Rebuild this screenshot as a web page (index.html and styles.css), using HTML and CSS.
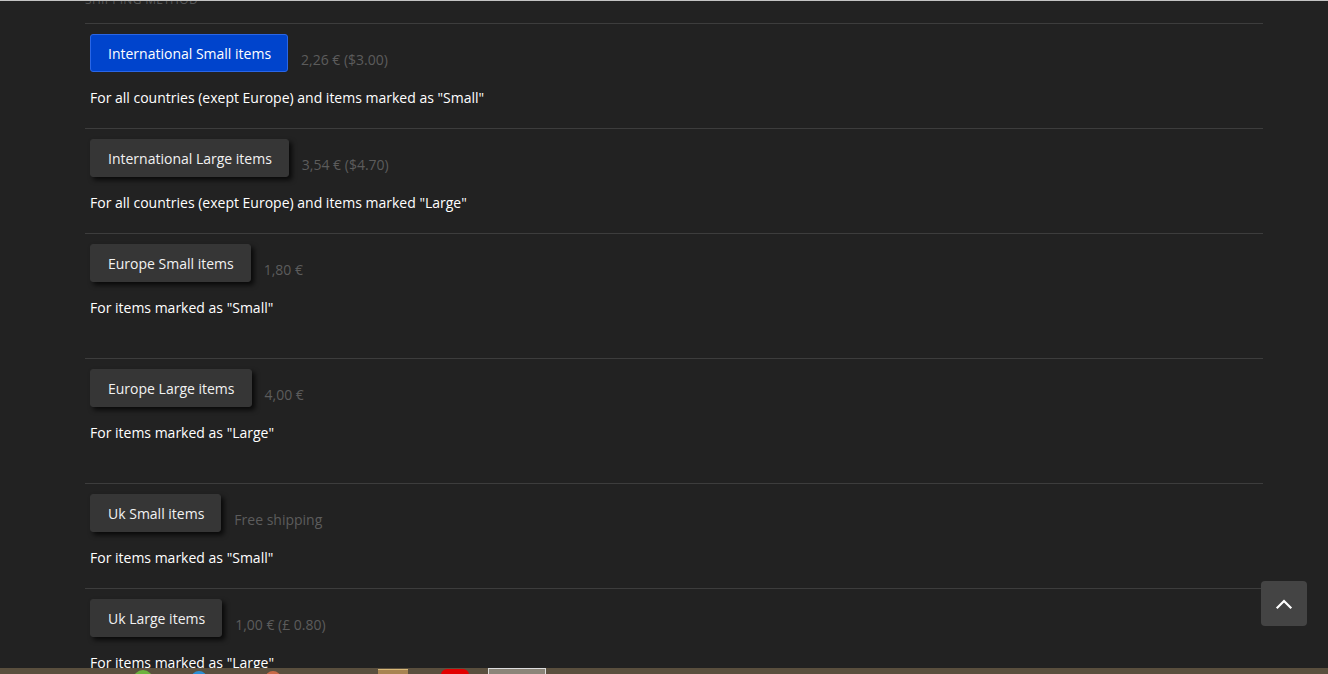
FILE: index.html
```html
<!DOCTYPE html>
<html>
<head>
<meta charset="utf-8">
<link rel="stylesheet" href="styles.css">
</head>
<body>
<div class="page">
  <div class="section-title">Shipping method</div>
  <div class="methods">
    <div class="row">
      <div class="top">
        <button class="btn btn-active">International Small items</button>
        <span class="price">2,26 € ($3.00)</span>
      </div>
      <p class="desc">For all countries (exept Europe) and items marked as "Small"</p>
    </div>
    <div class="row">
      <div class="top">
        <button class="btn">International Large items</button>
        <span class="price">3,54 € ($4.70)</span>
      </div>
      <p class="desc">For all countries (exept Europe) and items marked "Large"</p>
    </div>
    <div class="row tall">
      <div class="top">
        <button class="btn">Europe Small items</button>
        <span class="price">1,80 €</span>
      </div>
      <p class="desc">For items marked as "Small"</p>
    </div>
    <div class="row tall">
      <div class="top">
        <button class="btn">Europe Large items</button>
        <span class="price">4,00 €</span>
      </div>
      <p class="desc">For items marked as "Large"</p>
    </div>
    <div class="row">
      <div class="top">
        <button class="btn">Uk Small items</button>
        <span class="price">Free shipping</span>
      </div>
      <p class="desc">For items marked as "Small"</p>
    </div>
    <div class="row">
      <div class="top">
        <button class="btn">Uk Large items</button>
        <span class="price">1,00 € (£ 0.80)</span>
      </div>
      <p class="desc">For items marked as "Large"</p>
    </div>
  </div>
</div>
<a class="to-top" href="#" aria-label="Back to top">
  <svg width="18" height="12" viewBox="0 0 18 12"><path d="M2.5 9.5 L9 3 L15.5 9.5" fill="none" stroke="#ffffff" stroke-width="2.2" stroke-linecap="square"/></svg>
</a>
<div class="taskbar">
  <span class="tb tb-green"></span>
  <span class="tb tb-blue"></span>
  <span class="tb tb-orange"></span>
  <span class="tb tb-gold"></span>
  <span class="tb tb-red"></span>
  <span class="tb tb-box"></span>
</div>
</body>
</html>
```

FILE: styles.css
```css
html, body {
  margin: 0;
  padding: 0;
  background: #222222;
  height: 100%;
  overflow: hidden;
}
body {
  border-top: 1px solid #c4c4c4;
  box-sizing: border-box;
  font-family: "Open Sans", "Noto Sans", sans-serif;
  font-size: 14px;
  color: #ffffff;
}
.page {
  width: 1178px;
  margin-left: 85px;
}
.section-title {
  text-transform: uppercase;
  font-size: 12px;
  color: #555555;
  line-height: 16px;
  margin-top: -9px;
  height: 31px;
  letter-spacing: 0.3px;
}
.row {
  border-top: 1px solid #3d3d3d;
  padding: 10px 5px 20px;
}
.row.tall {
  padding-bottom: 40px;
}
.top {
  display: flex;
  align-items: flex-start;
}
.btn {
  font-family: "Open Sans", "Noto Sans", sans-serif;
  font-size: 14px;
  line-height: 20px;
  color: #f2f2f2;
  background: #363636;
  border: 1px solid #363636;
  border-radius: 3px;
  padding: 9px 16px 7px 17px;
  box-shadow: 3px 3px 5px rgba(0, 0, 0, 0.75);
  cursor: pointer;
}
.btn-active {
  background: #0044cc;
  border-color: #2a66e6;
  color: #ffffff;
  box-shadow: none;
}
.price {
  color: #5c5c5c;
  margin-left: 13px;
  padding-top: 16px;
  line-height: 20px;
}
.desc {
  margin: 16px 0 0;
  line-height: 20px;
}
.to-top {
  position: fixed;
  right: 21px;
  bottom: 48px;
  width: 46px;
  height: 45px;
  background: #444444;
  border-radius: 4px;
  display: flex;
  align-items: center;
  justify-content: center;
}
.taskbar {
  position: fixed;
  left: 0;
  right: 0;
  bottom: 0;
  height: 6px;
  background: #5a4f3e;
  display: flex;
  align-items: flex-start;
  overflow: hidden;
}
.tb {
  display: block;
  flex: none;
}
.tb-green {
  margin-left: 133px;
  width: 20px;
  height: 20px;
  margin-top: 2px;
  border-radius: 50%;
  background: #6cb33e;
}
.tb-blue {
  margin-left: 38px;
  width: 16px;
  height: 16px;
  margin-top: 3px;
  border-radius: 50%;
  background: #2a8fd6;
}
.tb-orange {
  margin-left: 58px;
  width: 16px;
  height: 16px;
  margin-top: 3px;
  border-radius: 50%;
  background: #c86a48;
}
.tb-gold {
  margin-left: 97px;
  width: 30px;
  height: 6px;
  margin-top: 1px;
  background: #a88452;
  border-top: 1px solid #d8b878;
}
.tb-red {
  margin-left: 33px;
  width: 28px;
  height: 8px;
  margin-top: 1px;
  border-radius: 6px 6px 0 0;
  background: #e20000;
}
.tb-box {
  margin-left: 19px;
  width: 56px;
  height: 6px;
  background: #8b8579;
  border: 1px solid #dcdcdc;
  border-bottom: none;
}
```
